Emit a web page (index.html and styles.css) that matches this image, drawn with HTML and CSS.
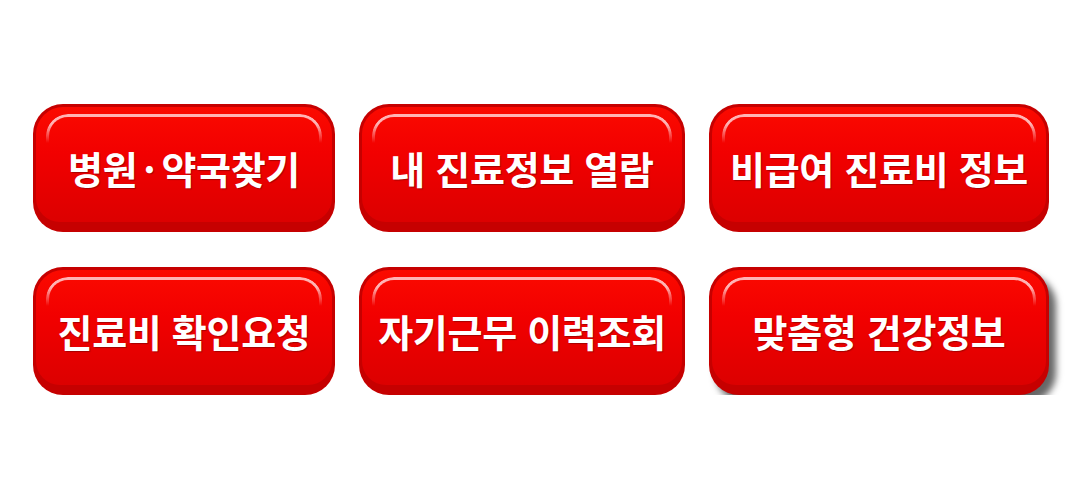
FILE: index.html
```html
<!DOCTYPE html>
<html lang="ko">
<head>
<meta charset="utf-8">
<link rel="stylesheet" href="styles.css">
</head>
<body>
<div class="grid">
  <a class="btn"><span class="face">병원<span class="dot">·</span>약국찾기</span></a>
  <a class="btn"><span class="face">내 진료정보 열람</span></a>
  <a class="btn"><span class="face">비급여 진료비 정보</span></a>
  <a class="btn"><span class="face">진료비 확인요청</span></a>
  <a class="btn"><span class="face">자기근무 이력조회</span></a>
  <a class="btn hover"><span class="face">맞춤형 건강정보</span></a>
</div>
</body>
</html>
```
FILE: styles.css
```css
html, body {
  margin: 0;
  padding: 0;
  background: #ffffff;
}
.grid {
  display: grid;
  grid-template-columns: 302px 326px 340px;
  grid-auto-rows: 128px;
  column-gap: 24px;
  row-gap: 35px;
  padding: 104px 0 0 33px;
}
.btn {
  display: flex;
  background: #c60000;
  border-radius: 30px;
  padding: 3px 3px 10px 3px;
  text-decoration: none;
}
.btn.hover {
  box-shadow: 7px 8px 7px rgba(0, 0, 0, 0.6);
}
.face {
  position: relative;
  flex: 1;
  display: flex;
  align-items: center;
  justify-content: center;
  border-radius: 27px 27px 24px 24px;
  background: linear-gradient(#fb0a00 0%, #f20000 40%, #dc0000 100%);
  color: #ffffff;
  font-family: "Noto Sans CJK KR", "Noto Sans", sans-serif;
  font-weight: 700;
  font-size: 38px;
  letter-spacing: -0.3px;
  white-space: nowrap;
  padding-top: 6px;
  text-shadow: 1px 1px 1px rgba(120, 0, 0, 0.6);
}
.dot {
  margin: 0 6px;
}
.face::before {
  content: "";
  position: absolute;
  left: 10px;
  right: 10px;
  top: 7px;
  height: 26px;
  border: 3px solid #ffb4b4;
  border-bottom: none;
  border-radius: 22px 22px 0 0;
  -webkit-mask-image: linear-gradient(#000 0%, #000 35%, transparent 100%);
  mask-image: linear-gradient(#000 0%, #000 35%, transparent 100%);
}
```
